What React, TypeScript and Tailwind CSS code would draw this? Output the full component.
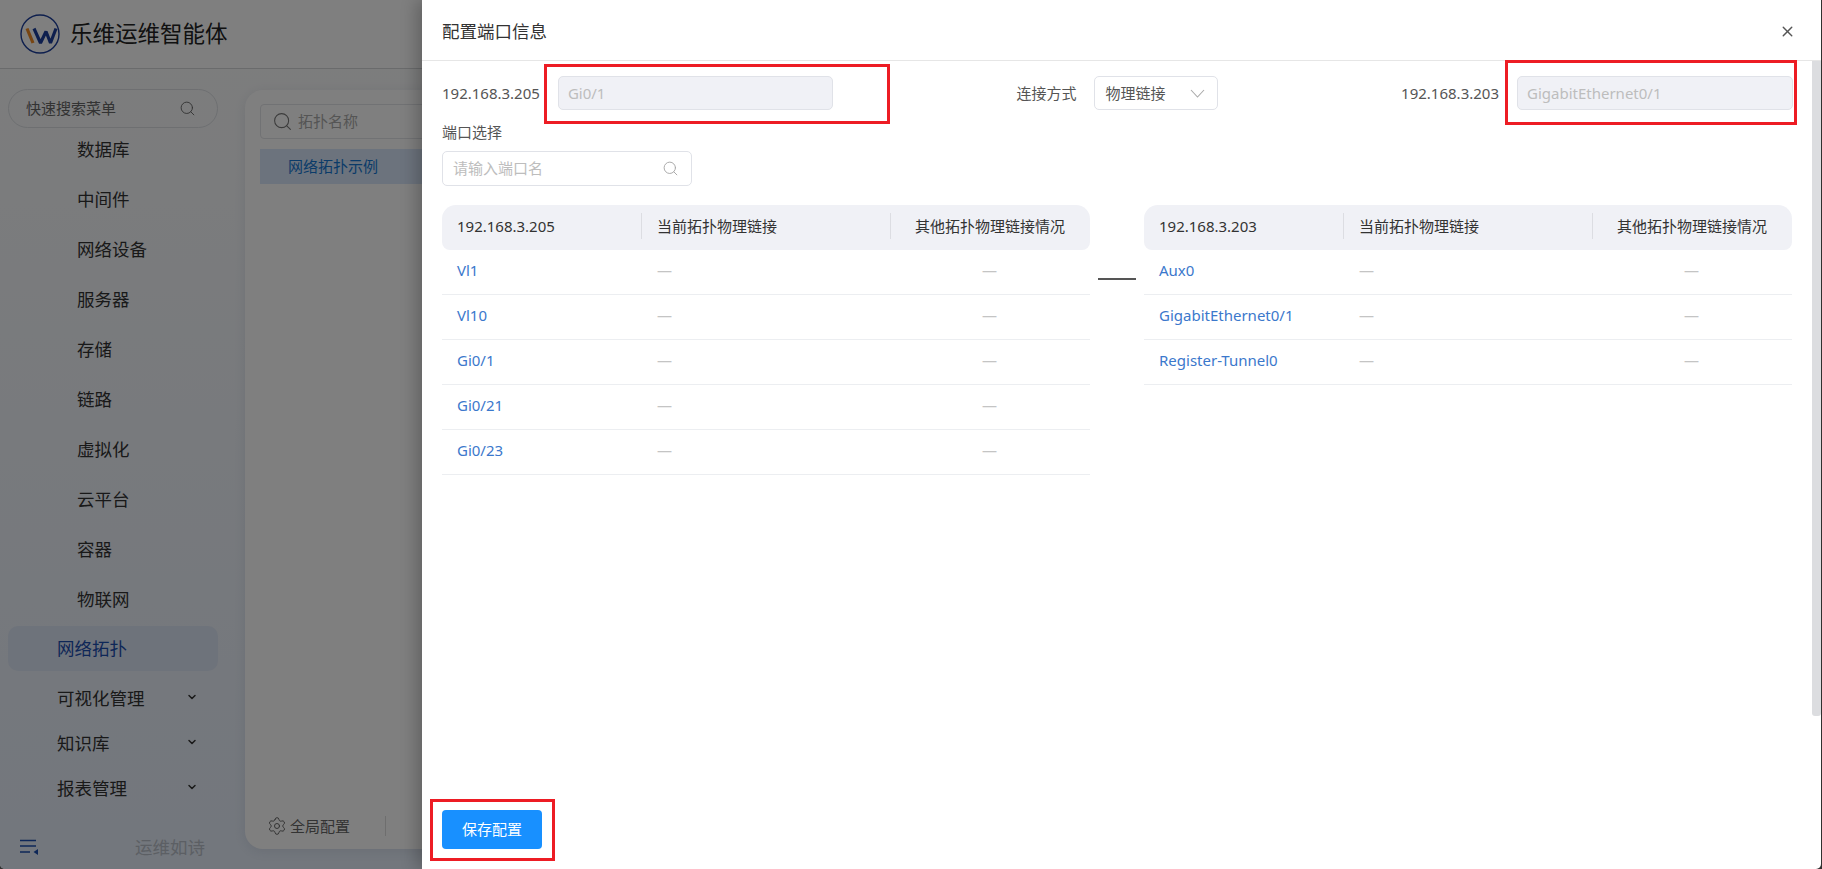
import { ChevronDown, Search, Settings, X } from 'lucide-react';

const font = '[font-family:"Noto_Sans","Noto_Sans_CJK_SC",sans-serif]';

const menuTop = ['数据库', '中间件', '网络设备', '服务器', '存储', '链路', '虚拟化', '云平台', '容器', '物联网'];
const menuBottom = ['可视化管理', '知识库', '报表管理'];

function Logo() {
  return (
    <svg width="40" height="40" viewBox="0 0 40 40" fill="none">
      <circle cx="20" cy="20" r="19" stroke="#1d3f9c" strokeWidth="1.4" />
      <path d="M7 14.5L13 29" stroke="#f08a24" strokeWidth="3.2" />
      <path d="M14 14.5L20.5 29L26 17.5L30.5 29L36 14.5" stroke="#1d3f9c" strokeWidth="3.2" strokeLinejoin="bevel" />
    </svg>
  );
}

function PortTable({ host, ports }: { host: string; ports: string[] }) {
  return (
    <div className="w-[648px]">
      <div className="grid h-[45px] grid-cols-[200px_249px_199px] items-center rounded-t-[14px] rounded-b-[8px] bg-[#f0f1f6] pb-[3px] text-[15px] text-[#333]">
        <div className="border-r border-[#dcdde2] pl-[15px] leading-[26px]">{host}</div>
        <div className="border-r border-[#dcdde2] pl-[15px] leading-[26px]">当前拓扑物理链接</div>
        <div className="pr-px text-center leading-[26px]">其他拓扑物理链接情况</div>
      </div>
      {ports.map((port) => (
        <div key={port} className="grid h-[45px] grid-cols-[200px_249px_199px] items-center border-b border-[#eceef1] pb-[3px] text-[15px]">
          <div className="pl-[15px] text-[#3b78cc]">{port}</div>
          <div className="pl-[15px] text-[#c4c4c4]">—</div>
          <div className="pr-[2px] text-center text-[#c4c4c4]">—</div>
        </div>
      ))}
    </div>
  );
}

export default function App() {
  return (
    <div className={`flex h-[869px] w-[1822px] overflow-hidden bg-[#333] ${font}`}>
      <aside className="relative flex w-[422px] shrink-0 flex-col overflow-hidden rounded-bl-[5px] bg-gradient-to-b from-[#fbfbfb] to-[#e6eefa]">
        <header className="flex h-[69px] shrink-0 items-center gap-[10px] border-b border-[#d4d6d8] bg-white pl-[20px]">
          <Logo />
          <span className="text-[22.5px] text-[#222]">乐维运维智能体</span>
        </header>
        <div className="flex min-h-0 flex-1">
          <nav className="flex w-[245px] shrink-0 flex-col">
            <div className="ml-2 mt-[20px] flex h-[39px] w-[210px] shrink-0 items-center justify-between rounded-full border border-[#dcdfe3] pl-[17px] pr-[21px] text-[15px] text-[#666]">
              <span>快速搜索菜单</span>
              <Search size={17} strokeWidth={1.3} />
            </div>
            <div className="-mt-[4px]">
              {menuTop.map((item) => (
                <div key={item} className="flex h-[50px] items-center pl-[77px] text-[17.5px] text-[#333]">
                  {item}
                </div>
              ))}
            </div>
            <div className="ml-2 mt-[2px] flex h-[45px] w-[210px] shrink-0 items-center rounded-[10px] bg-[#dde6f6] pl-[49px] text-[17.5px] text-[#1d4fb0]">
              网络拓扑
            </div>
            <div className="mt-[5px]">
              {menuBottom.map((item) => (
                <div key={item} className="flex h-[45px] w-[198px] items-center justify-between pl-[57px] text-[17.5px] text-[#333]">
                  <span>{item}</span>
                  <ChevronDown size={12} strokeWidth={3} className="-mt-1" />
                </div>
              ))}
            </div>
            <div className="mt-auto flex h-[36px] items-center pb-[8px] pl-[20px]">
              <svg width="18" height="16" viewBox="0 0 18 16" fill="none" stroke="#1d4fb0" strokeWidth="1.6">
                <path d="M0 1.5H16M0 7H16M0 13H10" />
                <path d="M18 10L13.5 13L18 16Z" fill="#1d4fb0" stroke="none" />
              </svg>
              <span className="ml-[97px] text-[17.5px] text-[#b8bec8]">运维如诗</span>
            </div>
          </nav>
          <main className="mb-[20px] mt-[21px] flex w-[400px] shrink-0 flex-col rounded-[18px] bg-white pt-[14px] shadow-[0_2px_12px_rgba(40,60,90,0.1)]">
            <div className="ml-[15px] flex h-[35px] items-center gap-[5px] rounded-[4px] border border-[#e2e4e8] pl-[11px] text-[15px] text-[#aaa]">
              <Search size={21} strokeWidth={1.2} className="text-[#777]" />
              <span>拓扑名称</span>
            </div>
            <div className="ml-[15px] mt-[10px] flex h-[35px] items-center bg-[#d8e7fb] pl-[28px] text-[15px] text-[#1677d2]">
              网络拓扑示例
            </div>
            <div className="mt-auto flex h-[46px] items-center pl-[22px] text-[15px] text-[#666]">
              <Settings size={20} strokeWidth={1.2} />
              <span className="ml-[3px]">全局配置</span>
              <span className="ml-[35px] h-[20px] w-px bg-[#ddd]" />
            </div>
          </main>
        </div>
        <div className="absolute inset-0 bg-black/50" />
      </aside>

      <section className="relative z-10 flex w-[1399px] shrink-0 flex-col rounded-br-[5px] bg-white shadow-[-6px_0_16px_rgba(0,0,0,0.22)]">
        <div className="flex h-[61px] shrink-0 items-center justify-between border-b border-[#e6e6e6] pl-[20px] pr-[25px]">
          <h1 className="pt-[2px] text-[17.5px] font-normal text-[#333]">配置端口信息</h1>
          <X size={17} strokeWidth={2} className="mt-[3px] text-[#555]" />
        </div>

        <div className="flex min-h-0 flex-1 flex-col pl-[20px] pr-[28px]">
          <div className="mt-[15px] flex h-[34px] items-center justify-between text-[15px] text-[#555]">
            <div className="flex items-center gap-[18px]">
              <span>192.168.3.205</span>
              <div className="flex h-[34px] w-[275px] items-center rounded-[5px] border border-[#e0e2e8] bg-[#f0f1f6] pl-[9px] text-[#bdbdbd]">Gi0/1</div>
            </div>
            <div className="flex items-center gap-[17px]">
              <span>连接方式</span>
              <div className="flex h-[34px] w-[124px] items-center justify-between rounded-[5px] border border-[#e0e2e8] pl-[11px] pr-[12px]">
                <span>物理链接</span>
                <svg width="15" height="9" viewBox="0 0 15 9" fill="none" stroke="#aaa" strokeWidth="1.1">
                  <path d="M1 1L7.5 8L14 1" />
                </svg>
              </div>
            </div>
            <div className="flex items-center gap-[18px]">
              <span>192.168.3.203</span>
              <div className="flex h-[34px] w-[276px] items-center rounded-[5px] border border-[#e0e2e8] bg-[#f0f1f6] pl-[9px] text-[#bdbdbd]">GigabitEthernet0/1</div>
            </div>
          </div>

          <div className="mt-[11px] text-[15px] leading-[22px] text-[#555]">端口选择</div>
          <div className="mt-[8px] flex h-[35px] w-[250px] items-center justify-between rounded-[5px] border border-[#e0e2e8] pl-[10px] pr-[12px] text-[15px] text-[#bdbdbd]">
            <span>请输入端口名</span>
            <Search size={17} strokeWidth={1.4} className="text-[#aaa]" />
          </div>

          <div className="mt-[19px] flex items-start">
            <PortTable host="192.168.3.205" ports={['Vl1', 'Vl10', 'Gi0/1', 'Gi0/21', 'Gi0/23']} />
            <div className="mx-[8px] mt-[73px] h-[2px] w-[38px] bg-[#555]" />
            <PortTable host="192.168.3.203" ports={['Aux0', 'GigabitEthernet0/1', 'Register-Tunnel0']} />
          </div>

          <div className="mt-auto pb-[20px]">
            <button className="h-[39px] w-[100px] rounded-[4px] bg-[#1890ff] text-[15px] text-white">保存配置</button>
          </div>
        </div>

        {/* scrollbar + red annotation boxes sit over the drawer */}
        <div className="absolute left-[1390px] top-[61px] h-[655px] w-[9px] rounded-b-[3px] bg-[#dcdde0]" />
        <div className="absolute left-[122px] top-[64px] h-[60px] w-[346px] border-[3px] border-[#ed1c24]" />
        <div className="absolute left-[1083px] top-[60px] h-[65px] w-[292px] border-[3px] border-[#ed1c24]" />
        <div className="absolute left-[8px] top-[799px] h-[62px] w-[125px] border-[3px] border-[#ed1c24]" />
      </section>
    </div>
  );
}
